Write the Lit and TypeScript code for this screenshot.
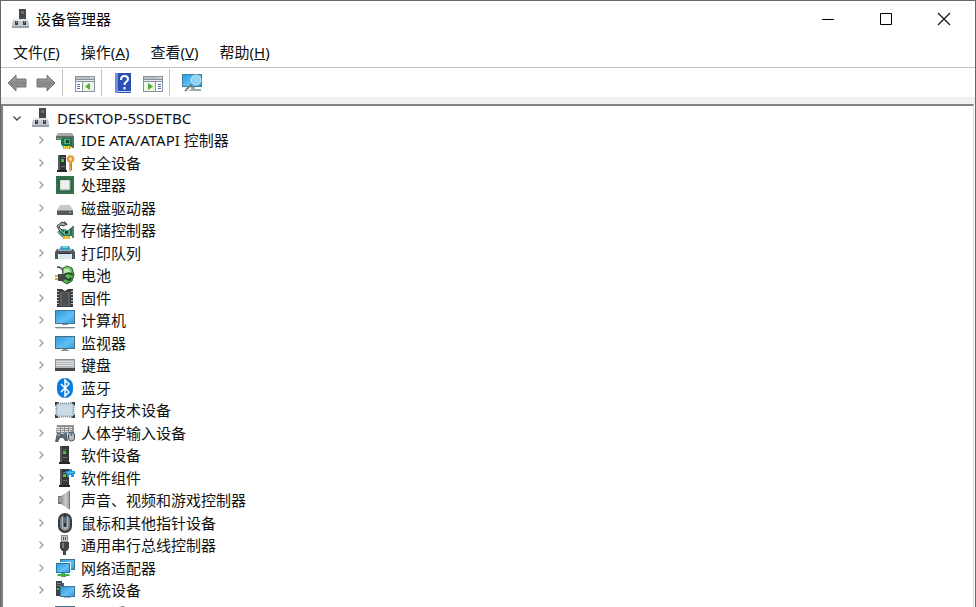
import { LitElement, html, svg, css } from "lit";
import { customElement, state } from "lit/decorators.js";

const defs = svg`
  <defs>
    <linearGradient id="scr" x1="0" y1="0" x2="1" y2="1"><stop offset="0" stop-color="#2f9be0"/><stop offset=".6" stop-color="#62c0f4"/><stop offset="1" stop-color="#2f9be0"/></linearGradient>
    <linearGradient id="spk" x1="0" y1="0" x2="1" y2="0"><stop offset="0" stop-color="#8b9094"/><stop offset=".5" stop-color="#c9ccce"/><stop offset="1" stop-color="#94989b"/></linearGradient>
    <linearGradient id="grn" x1="0" y1="0" x2="1" y2="1"><stop offset="0" stop-color="#9be089"/><stop offset="1" stop-color="#2d9434"/></linearGradient>
    <linearGradient id="arr" x1="0" y1="0" x2="0" y2="1"><stop offset="0" stop-color="#aaa"/><stop offset=".5" stop-color="#888"/><stop offset="1" stop-color="#999"/></linearGradient>
  </defs>`;

const tower = svg`
  <path d="M5 1h9v16H5z" fill="#34383a"/><path d="M5 1h2v16H5z" fill="#54595b"/>
  <path d="M8 4.500h4M8 12.500h4" stroke="#697073"/><path d="M8 6h3v3H8z" fill="#48c638"/>
  <path d="M4 17h11v2H4z" fill="#222628"/>`;

const icons: Record<string, unknown> = {
  pc: svg`
    <path d="M8 0h7v10H8z" fill="#45484a"/><path d="M10 2h3v3h-3z" fill="#66706b"/><path d="M11 3h2v1h-2z" fill="#4a8a4c"/>
    <path d="M3 10h13l2 4v5H1v-5z" fill="#c4c9cf"/><path d="M3 10h13l1 2H2z" fill="#e2e5e8"/>
    <path d="M1 17h17v2H1z" fill="#9aa0a7"/><path d="M4 12h3v4H4zM12 12h3v4h-3z" fill="#3d4247"/><path d="M5 12h1v2H5zM13 12h1v2h-1z" fill="#868c92"/>`,
  ide: svg`
    <path d="M3 3h14l2 3v2H1V6z" fill="#a7aaac"/><path d="M1 6h17v4H1z" fill="#64696b"/><path d="M2 8h5v1H2z" fill="#51c844"/>
    <path d="M7 8h11v9H8l-2-3v-4z" fill="#18764a"/><path d="M9 9h6v5H9z" fill="#50ad78"/><path d="M11 10h3v3h-3z" fill="#174835"/>
    <path d="M17 6h2v12h-2z" fill="#4b7564"/><path d="M8 16h8v3H8z" fill="#d4a52c"/><path d="M9.500 16v3M11.500 16v3M13.500 16v3" stroke="#f6d45e"/>`,
  security: svg`
    <path d="M3 2h8v15H3z" fill="#303436"/><path d="M3 2h2v15H3z" fill="#555b5d"/><path d="M6 6h3v3H6z" fill="#45c63a"/><path d="M6 4.500h4M6 13.500h4" stroke="#6c7274"/>
    <path d="M2 17h10v2H2z" fill="#242729"/><circle cx="15.500" cy="6" r="2.800" fill="#f3d6a2" stroke="#e29a32" stroke-width="2"/><path d="M14 9h3v8l-1.500 2-1.500-2z" fill="#e8a63d"/><path d="M16.500 10v7" stroke="#c07a22"/>`,
  cpu: svg`
    <path d="M1 1h18v18H1z" fill="#2a6844"/><path d="M2 2h16v16H2z" fill="none" stroke="#4f8b65" stroke-dasharray="1 1"/>
    <path d="M5 5h10v10H5z" fill="#d9e0dc"/><path d="M6 6h8v8H6z" fill="#ecefed"/><path d="M15 5v10H5" fill="none" stroke="#99a79f"/>`,
  disk: svg`<path d="M5 7h10l3 5H2z" fill="#c6c9ca"/><path d="M2 12h16v5H2z" fill="#55595b"/><path d="M2 12.500h16" stroke="#8d9294"/><path d="M14 14h2v1h-2z" fill="#55d84b"/>`,
  storage: svg`
    <path d="M2 6l5-4 4 2-2 2-3-1-2 2 3 3-2 2z" fill="#aaaead" stroke="#393e3e"/><path d="M9 2l3 3" stroke="#555" stroke-width="2"/>
    <path d="M2 12l6-3 5 1 4-3v9h-3l-2 1H7z" fill="#19794d"/><path d="M9 10h6v5H9z" fill="#5aa987"/><path d="M10 11h3v3h-3z" fill="#1d3d32"/>
    <path d="M17 6h2v12h-2z" fill="#617a70"/><path d="M3 12l5 4M5 10l5 4" stroke="#b7c1bc"/><path d="M8 16h7v3H8z" fill="#dfaa32"/><path d="M10.500 16v3M12.500 16v3" stroke="#f5d362"/>`,
  printer: svg`
    <path d="M6 3h8l2 4H4z" fill="#2d9fc4"/><path d="M7 3h6v2H7z" fill="#6fd0e4"/><path d="M2 6h16l2 3v7h-3v-5H3v5H0V9z" fill="#4e555b"/>
    <path d="M3 6h14v2H3z" fill="#9aa3aa"/><path d="M4 10h12l1 6H3z" fill="#d9e8f1"/><path d="M4 10h12v1H4z" fill="#2d3338"/><path d="M6 6h8v1H6z" fill="#35aecb"/>`,
  battery: svg`
    <path d="M2 2q5 0 6 4" fill="none" stroke="#3a3d3e" stroke-width="1.400"/><path d="M8 3l4-2 5 2 2 7-2 6-5 3-5-3z" fill="url(#grn)" stroke="#315b36"/>
    <path d="M9 4h5l2 3-2 2H9z" fill="#bfe9b1"/><path d="M8 11q5-5 10-1" fill="none" stroke="#214b26" stroke-width="2"/>
    <path d="M3 9h5l3 2v3l-3 2H3z" fill="#42484a"/><path d="M0 10h3v2H0zM0 13h3v2H0z" fill="#dba436"/><path d="M11 13q3 4 5 0" stroke="#244429" fill="none" stroke-width="2"/>`,
  firmware: svg`
    <path d="M2 1h5l3 2 3-2h5v18H2z" fill="#3a3d3f"/><path d="M5 4h10v14H5z" fill="#5d6164"/><path d="M7 5h6v12H7z" fill="#4b4f52"/>
    <path d="M3 3v15M17 3v15" stroke="#b9bcbe" stroke-width="2" stroke-dasharray="1 2"/>`,
  computer: svg`<path d="M0 0h20v14H0z" fill="#44758f"/><path d="M1 1h18v12H1z" fill="url(#scr)"/><path d="M7 14h6v1H7z" fill="#86939b"/><path d="M0 17h20v1H0z" fill="#82898d"/><path d="M1 18h18v1H1z" fill="#d1d5d7"/>`,
  monitor: svg`<path d="M0 3h20v13H0z" fill="#476f84"/><path d="M1 4h18v11H1z" fill="url(#scr)"/><path d="M8 16h4v1h2v1H6v-1h2z" fill="#829099"/>`,
  keyboard: svg`<path d="M0 4h20v12H0z" fill="#8d9295"/><path d="M1 5h18v8H1z" fill="#b4b8ba"/><path d="M1 6.500h18M1 8.500h18M1 10.500h18" stroke="#dcdfe0"/><path d="M0 13h20v3H0z" fill="#44494c"/>`,
  bluetooth: svg`<rect x="2" y="0" width="16" height="20" rx="8" fill="#0b7ddc"/><path d="M6 6l8 8-4 4V2l4 4-8 8" fill="none" stroke="#fff" stroke-width="1.500"/>`,
  memory: svg`
    <path d="M1 3h18v14H1z" fill="#b6c9d7"/><path d="M3 5h14v10H3z" fill="#cbdae5"/><path d="M1 3h18v14H1z" fill="none" stroke="#718391" stroke-dasharray="1 1"/>
    <path d="M0 2h4L0 6zM20 2h-4l4 4zM0 18h4l-4-4zM20 18h-4l4-4z" fill="#303b44"/>`,
  hid: svg`
    <path d="M2 2h17v8H1z" fill="#8d9194"/><path d="M2 4.500h16M2 6.500h16M2 8.500h16" stroke="#e2e4e5" stroke-dasharray="3 1"/>
    <path d="M2 10h3l2 1 3-1h2l1 8h-3l-2-3H5l-2 4H0z" fill="#59656e"/><circle cx="4" cy="12" r="1" fill="#b5c1c8"/><circle cx="9" cy="12" r="1" fill="#388cc7"/>
    <rect x="13.500" y="9" width="6" height="9" rx="3" fill="#b9bec1" stroke="#4a5257"/><path d="M16.500 9v4" stroke="#1c80bd" stroke-width="1.500"/>`,
  software: tower,
  component: svg`${tower}<path d="M11 3h3V1h3v2h3v3h-1v3h-3V7h-2v2h-2V6h-1z" fill="#2299dc"/><path d="M13 4h5v1h-5z" fill="#65c3f1"/>`,
  sound: svg`<path d="M3 6h4v8H3z" fill="#6d7377"/><path d="M6 6l9-6v20l-9-6z" fill="url(#spk)"/><path d="M14.500 1v18" stroke="#74797d"/><path d="M4 7h2v5H4z" fill="#9ca2a6"/>`,
  mouse: svg`<rect x="4" y="1" width="12" height="18" rx="6" fill="#7f868d" stroke="#343a40" stroke-width="2"/><path d="M7 4v11q3 3 6 0V4" fill="#acb3b9"/><path d="M10 2v12" stroke="#253441" stroke-width="3"/><path d="M10 4v6" stroke="#78abd3"/>`,
  usb: svg`<path d="M6 0h7v7H6z" fill="#878c90"/><path d="M7 1h5v5H7z" fill="#c4c8ca"/><path d="M8 2h1v3H8zM10 2h1v3h-1z" fill="#4c5155"/><path d="M5 7h9v6l-2 3H7l-2-3z" fill="#3d4143"/><path d="M7 8h2v5H7z" fill="#747a7e"/><path d="M8 16h3v4H8z" fill="#484c4e"/>`,
  network: svg`
    <path d="M5 1h15v11H5z" fill="#3c728c"/><path d="M6 2h13v9H6z" fill="url(#scr)"/><path d="M1 4h15v11H1z" fill="#e2eff6"/><path d="M1 5h14v10H1z" fill="#2876a5"/><path d="M2 6h12v8H2z" fill="url(#scr)"/>
    <path d="M6 15h4v1h4l1 2h-4v1H6v-1H2l1-2h3z" fill="#3fae45"/>`,
  system: svg`
    <path d="M1 1h6v15H1z" fill="#3b4146"/><path d="M2 3.500h4M2 5.500h4" stroke="#7b858b"/><path d="M2 8h2v2H2z" fill="#4cc442"/><path d="M7 3h2v4H7z" fill="#555e64"/>
    <path d="M5 6h15v11H5z" fill="#3c7897"/><path d="M6 7h13v9H6z" fill="url(#scr)"/><path d="M9 17h7v1H9z" fill="#a1afb8"/>`,
};

const categories: [string, string][] = [
  ["ide", "IDE ATA/ATAPI 控制器"], ["security", "安全设备"], ["cpu", "处理器"],
  ["disk", "磁盘驱动器"], ["storage", "存储控制器"], ["printer", "打印队列"],
  ["battery", "电池"], ["firmware", "固件"], ["computer", "计算机"],
  ["monitor", "监视器"], ["keyboard", "键盘"], ["bluetooth", "蓝牙"],
  ["memory", "内存技术设备"], ["hid", "人体学输入设备"], ["software", "软件设备"],
  ["component", "软件组件"], ["sound", "声音、视频和游戏控制器"], ["mouse", "鼠标和其他指针设备"],
  ["usb", "通用串行总线控制器"], ["network", "网络适配器"], ["system", "系统设备"],
  ["monitor", "显示适配器"],
];

const menus = [["文件", "F"], ["操作", "A"], ["查看", "V"], ["帮助", "H"]];

const icon = (name: string) =>
  html`<svg class="icon" viewBox="0 0 20 20" aria-hidden="true">${defs}${icons[name]}</svg>`;

const panelTool = (flip: boolean) => html`
  <svg class="icon" viewBox="0 0 20 20" aria-hidden="true">
    <path d="M0 3h20v16H0z" fill="#8b929b"/><path d="M1 4h18v2H1z" fill="#b9c0ca"/><path d="M15 4h1v1h-1zM17 4h1v1h-1z" fill="#fff"/>
    <path d="M1 7h18v1H1z" fill="#e6e9ee"/><path d="M1 9h18v9H1z" fill="#fff"/>
    ${flip
      ? svg`<path d="M1 9h11v9H1z" fill="#eef5e9"/><path d="M12.500 9v9" stroke="#8b929b"/><path d="M15 11.500h3M15 13.500h3M15 15.500h3" stroke="#4b6fae"/><path d="M5 10l5 3.500-5 3.500z" fill="#4fae35"/>`
      : svg`<path d="M8 9h11v9H8z" fill="#eef5e9"/><path d="M7.500 9v9" stroke="#8b929b"/><path d="M2 11.500h3M2 13.500h3M2 15.500h3" stroke="#3e6fc0"/><path d="M15 10l-5 3.500 5 3.500z" fill="#4fae35"/>`}
  </svg>`;

@customElement("app-root")
export class AppRoot extends LitElement {
  @state() private open = true;

  static styles = css`
    :host {
      display: flex;
      flex-direction: column;
      box-sizing: border-box;
      height: 100vh;
      overflow: hidden;
      background: #fff;
      border: 1px solid #666;
      border-bottom: 0;
      color: #111;
      font: 15px/22px "Noto Sans", "Noto Sans CJK SC", sans-serif;
    }
    button {
      font: inherit;
      color: inherit;
      background: none;
      border: 0;
      padding: 0;
      margin: 0;
    }
    svg { display: block; flex: none; }
    .icon { width: 20px; height: 20px; }
    .titlebar { display: flex; align-items: center; height: 36px; padding: 0 2px 0 10px; flex: none; }
    h1 { flex: 1; margin: 0 0 0 5px; font: inherit; color: #000; }
    .caption { display: grid; place-items: center; width: 58px; height: 36px; }
    .caption svg { width: 14px; height: 14px; }
    .menubar { display: flex; gap: 21px; height: 30px; padding-left: 12px; flex: none; }
    .toolbar {
      display: flex;
      align-items: center;
      height: 29px;
      flex: none;
      padding-left: 6px;
      border-top: 1px solid #c4c4c4;
    }
    .toolbar button { display: grid; place-items: center; width: 20px; height: 26px; }
    .toolbar button + button { margin-left: 9px; }
    .rule { width: 1px; height: 27px; margin: 0 12px 0 6px; background: #c4c4c4; }
    .frame { display: flex; flex-direction: column; flex: 1; min-height: 0; border-top: 7px solid #f0f0f0; }
    .tree {
      flex: 1;
      min-height: 0;
      overflow: hidden;
      border: 2px solid #828282;
      border-right: 1px solid #ddd;
      border-bottom: 0;
      margin-right: 1px;
    }
    ul { display: grid; grid-auto-rows: 23px 22px; list-style: none; margin: 0; padding: 0; }
    li { display: flex; align-items: center; padding-left: 31px; }
    li.root { padding-left: 7px; }
    .twist { display: grid; place-items: center; width: 14px; height: 20px; margin-right: 7px; }
    .twist svg { width: 10px; height: 10px; }
    .label { margin-left: 6px; white-space: nowrap; }
  `;

  render() {
    return html`
      <header class="titlebar">
        ${icon("pc")}
        <h1>设备管理器</h1>
        <button class="caption" aria-label="最小化"><svg viewBox="0 0 14 14"><path d="M1 7.500h12" stroke="#000"/></svg></button>
        <button class="caption" aria-label="最大化"><svg viewBox="0 0 14 14"><path d="M1.500 1.500h11v11h-11z" fill="none" stroke="#000"/></svg></button>
        <button class="caption" aria-label="关闭"><svg viewBox="0 0 14 14"><path d="M1 1l12 12M13 1L1 13" stroke="#111" stroke-width="1.200"/></svg></button>
      </header>
      <nav class="menubar">
        ${menus.map(([text, key]) => html`<button>${text}(<u>${key}</u>)</button>`)}
      </nav>
      <div class="toolbar" role="toolbar">
        <button aria-label="后退"><svg class="icon" viewBox="0 0 20 20">${defs}<path d="M1 10l8-8v4h10v8H9v4z" fill="url(#arr)" stroke="#777"/></svg></button>
        <button aria-label="前进"><svg class="icon" viewBox="0 0 20 20">${defs}<path d="M19 10l-8-8v4H1v8h10v4z" fill="url(#arr)" stroke="#777"/></svg></button>
        <span class="rule"></span>
        <button aria-label="显示/隐藏控制台树">${panelTool(false)}</button>
        <span class="rule"></span>
        <button aria-label="帮助">
          <svg class="icon" viewBox="0 0 20 20"><path d="M1 0h16v20H1z" fill="#2b50b4"/><path d="M1 0h3v20H1z" fill="#6f8fe0"/><path d="M4 18h13v1H4z" fill="#c8d3f2"/><path d="M7 7q0-4 3.500-4T14 6q0 2-2 3-1.500 1-1.500 3M10.500 14v2.500" fill="none" stroke="#fff" stroke-width="2"/></svg>
        </button>
        <button aria-label="显示/隐藏操作窗格">${panelTool(true)}</button>
        <span class="rule"></span>
        <button aria-label="扫描检测硬件改动">
          <svg class="icon" viewBox="0 0 20 20">${defs}<path d="M0 1h20v13H0z" fill="#3c7f9f"/><path d="M1 2h18v11H1z" fill="url(#scr)"/><path d="M9 14h4v2h6v2H7v-1h2z" fill="#9aa7ae"/><circle cx="14" cy="7" r="5" fill="#8ed3f5" stroke="#c5dfec"/><path d="M10 11l-7 7" stroke="#6d8797" stroke-width="2"/></svg>
        </button>
      </div>
      <main class="frame">
        <div class="tree">
          <ul>
            <li class="root">
              <button class="twist" aria-label="展开或折叠" aria-expanded=${this.open} @click=${() => (this.open = !this.open)}>
                <svg viewBox="0 0 10 10"><path d="M1.500 3.500L5 7l3.500-3.500" fill="none" stroke="#444" stroke-width="1.300"/></svg>
              </button>
              ${icon("pc")}<span class="label">DESKTOP-5SDETBC</span>
            </li>
            ${this.open
              ? categories.map(([name, label]) => html`
                <li>
                  <button class="twist" aria-label=${"展开 " + label}>
                    <svg viewBox="0 0 10 10"><path d="M3.500 1.500L7 5 3.500 8.500" fill="none" stroke="#999" stroke-width="1.200"/></svg>
                  </button>
                  ${icon(name)}<span class="label">${label}</span>
                </li>`)
              : null}
          </ul>
        </div>
      </main>`;
  }
}
